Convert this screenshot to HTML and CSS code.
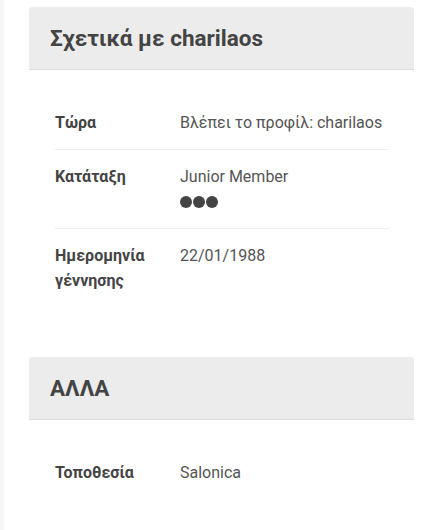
FILE: index.html
```html
<!DOCTYPE html>
<html lang="el">
<head>
<meta charset="utf-8">
<link rel="stylesheet" href="styles.css">
</head>
<body>
<div class="page">
  <div class="strip"></div>
  <main class="main">
    <section class="card">
      <h2 class="card-head">Σχετικά με charilaos</h2>
      <div class="card-body">
        <div class="row">
          <div class="label">Τώρα</div>
          <div class="value">Βλέπει το προφίλ: charilaos</div>
        </div>
        <div class="row">
          <div class="label">Κατάταξη</div>
          <div class="value">Junior Member
            <div class="dots"><span class="dot"></span><span class="dot"></span><span class="dot"></span></div>
          </div>
        </div>
        <div class="row">
          <div class="label">Ημερομηνία γέννησης</div>
          <div class="value">22/01/1988</div>
        </div>
      </div>
    </section>
    <section class="card">
      <h2 class="card-head">ΑΛΛΑ</h2>
      <div class="card-body">
        <div class="row">
          <div class="label">Τοποθεσία</div>
          <div class="value">Salonica</div>
        </div>
      </div>
    </section>
  </main>
</div>
</body>
</html>
```

FILE: styles.css
```css
html, body {
  margin: 0;
  padding: 0;
  background: #ffffff;
}
body {
  font-family: Roboto, "Noto Sans", sans-serif;
  font-size: 16px;
  line-height: 25px;
  color: #555555;
}
.page {
  display: flex;
  min-height: 530px;
}
.strip {
  width: 4px;
  flex: none;
  background: #f7f7f7;
}
.main {
  flex: 1;
  padding: 7px 9px 0 25px;
  display: flex;
  flex-direction: column;
  gap: 24px;
}
.card {
  background: #fff;
  border-radius: 4px 4px 0 0;
}
.card-head {
  margin: 0;
  height: 63px;
  box-sizing: border-box;
  padding: 0 21px;
  display: flex;
  align-items: center;
  background: #ececec;
  border-bottom: 1px solid #dddddd;
  border-radius: 4px 4px 0 0;
  font-size: 22.5px;
  font-weight: 700;
  color: #444444;
}
.card-body {
  padding: 26px 25px 26px 26px;
}
.row {
  display: flex;
  padding: 14px 0;
  border-bottom: 1px solid #eeeeee;
}
.row:last-child {
  border-bottom: none;
}
.label {
  width: 105px;
  margin-right: 20px;
  flex: none;
  font-weight: 700;
  color: #444444;
}
.value {
  flex: 1;
}
.dots {
  display: flex;
  align-items: center;
  height: 25px;
  gap: 1px;
}
.dot {
  width: 12px;
  height: 12px;
  border-radius: 50%;
  background: #444444;
}
```
